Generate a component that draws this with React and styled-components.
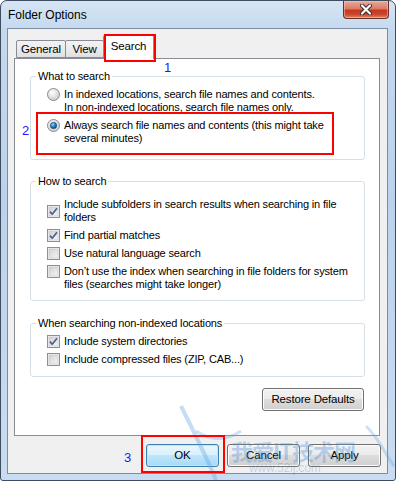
import React from 'react';
import styled, { createGlobalStyle } from 'styled-components';

const GlobalStyle = createGlobalStyle`
  html, body {
    margin: 0;
    padding: 0;
    background: #ffffff;
  }
  body {
    font-family: "Liberation Sans", Arial, sans-serif;
    font-size: 11px;
    letter-spacing: -0.15px;
    color: #000;
  }
`;

const Window = styled.div`
  position: relative;
  width: 396px;
  height: 481px;
  box-sizing: border-box;
  border: 1px solid #3d4d5f;
  border-radius: 7px 7px 3px 3px;
  background: linear-gradient(180deg, #d6e5f5 0px, #c4d8ee 30px, #bcd2ec 200px, #c9dcf1 481px);
  display: flex;
  flex-direction: column;
  overflow: hidden;
`;

const TitleBar = styled.div`
  height: 27px;
  flex: none;
  display: flex;
  justify-content: space-between;
  align-items: flex-start;
  padding-left: 7px;
`;

const Title = styled.div`
  line-height: 28px;
  font-size: 12px;
  letter-spacing: 0;
`;

const CloseButton = styled.div`
  width: 46px;
  height: 18px;
  box-sizing: border-box;
  margin-right: 6px;
  border: 1px solid #6b2f25;
  border-top: none;
  border-radius: 0 0 4px 4px;
  background: linear-gradient(180deg, #e9a99b 0%, #dc7b66 45%, #c7371f 55%, #c94a30 80%, #e08a6c 100%);
  box-shadow: inset 0 0 0 1px rgba(255, 200, 190, 0.5);
  display: flex;
  align-items: center;
  justify-content: center;
`;

const Client = styled.div`
  flex: 1;
  margin: 0 7px 6px 6px;
  border: 1px solid #7d8da0;
  background: #f0f0f0;
  display: flex;
  flex-direction: column;
  padding: 6px 7px 0 6px;
`;

const TabStrip = styled.div`
  height: 23px;
  display: flex;
  align-items: flex-end;
  padding-left: 2px;
  position: relative;
  z-index: 2;
`;

const Tab = styled.div`
  width: ${p => p.$w}px;
  height: ${p => (p.$active ? 24 : 18)}px;
  margin-bottom: ${p => (p.$active ? -1 : 0)}px;
  margin-left: ${p => (p.$first ? 0 : -1)}px;
  box-sizing: border-box;
  border: 1px solid #898c95;
  border-bottom: ${p => (p.$active ? 'none' : '1px solid #898c95')};
  border-radius: 2px 2px 0 0;
  background: ${p =>
    p.$active ? '#ffffff' : 'linear-gradient(180deg, #f3f3f3 0%, #ebebeb 50%, #e0e0e0 100%)'};
  display: flex;
  justify-content: center;
  align-items: ${p => (p.$active ? 'flex-start' : 'center')};
  padding-top: ${p => (p.$active ? 4 : 0)}px;
  font-size: 11.5px;
  line-height: 13px;
  white-space: nowrap;
`;

const Panel = styled.div`
  height: 378px;
  box-sizing: border-box;
  border: 1px solid #898c95;
  background: #ffffff;
  display: flex;
  flex-direction: column;
  padding: 0 14px 0 15px;
`;

const GroupBox = styled.div`
  margin-top: ${p => p.$mt}px;
  border: 1px solid #d5dfe5;
  border-radius: 3px;
  display: flex;
  flex-direction: column;
  padding: 0 10px ${p => p.$pb}px 16px;
`;

const GroupTitle = styled.div`
  align-self: flex-start;
  margin: -7px 0 0 -11px;
  padding: 0 2px;
  background: #ffffff;
  line-height: 13px;
  white-space: nowrap;
`;

const Rows = styled.div`
  margin-top: ${p => p.$mt}px;
  display: flex;
  flex-direction: column;
  gap: ${p => p.$gap || 5}px;
`;

const Option = styled.div`
  display: flex;
  align-items: ${p => (p.$center ? 'center' : 'flex-start')};
  gap: 4px;
`;

const OptionText = styled.div`
  line-height: 13px;
  white-space: nowrap;
`;

const Control = styled.svg`
  flex: none;
  width: 13px;
  height: 13px;
`;

const Button = styled.div`
  width: ${p => p.$w}px;
  height: 23px;
  box-sizing: border-box;
  border: 1px solid ${p => (p.$default ? '#3c7fb1' : '#707070')};
  border-radius: 3px;
  background: ${p =>
    p.$default
      ? 'linear-gradient(180deg, #eaf6fd 0%, #d9f0fc 49%, #bee6fd 50%, #a7d9f5 100%)'
      : 'linear-gradient(180deg, #f2f2f2 0%, #ebebeb 49%, #dddddd 50%, #cfcfcf 100%)'};
  box-shadow: inset 0 0 0 1px ${p => (p.$default ? '#c4e5f6' : '#fcfcfc')};
  display: flex;
  align-items: center;
  justify-content: center;
  font-size: 11.5px;
  line-height: 13px;
  white-space: nowrap;
`;

const RestoreRow = styled.div`
  margin-top: 11px;
  display: flex;
  justify-content: flex-end;
  padding-right: 1px;
`;

const ButtonRow = styled.div`
  margin-top: 8px;
  margin-right: -1px;
  display: flex;
  justify-content: flex-end;
  gap: 8px;
`;

const RedBox = styled.div`
  position: absolute;
  box-sizing: border-box;
  border: 2px solid #ff0000;
  z-index: 5;
`;

const Marker = styled.div`
  position: absolute;
  z-index: 5;
  font-size: 13px;
  line-height: 14px;
  letter-spacing: 0;
  color: #1a1aff;
`;

const Watermark = styled.div`
  position: absolute;
  left: 175px;
  top: 395px;
  width: 221px;
  height: 86px;
  z-index: 4;
  pointer-events: none;
`;

const MarkTitle = styled.div`
  position: absolute;
  left: 55px;
  top: 42px;
  font-family: "Noto Sans CJK SC", sans-serif;
  font-weight: 700;
  font-size: 22px;
  line-height: 24px;
  letter-spacing: -1px;
  color: rgba(70, 140, 215, 0.35);
`;

const MarkUrl = styled.div`
  position: absolute;
  left: 73px;
  top: 66px;
  font-size: 12px;
  line-height: 12px;
  color: rgba(70, 140, 215, 0.3);
`;

const Radio = ({ checked }) => (
  <Control viewBox="0 0 13 13">
    <defs>
      <radialGradient id="rbg" cx="0.4" cy="0.35" r="0.7">
        <stop offset="0" stopColor="#ffffff" />
        <stop offset="1" stopColor="#c9c9c9" />
      </radialGradient>
      <radialGradient id="rdot" cx="0.4" cy="0.35" r="0.7">
        <stop offset="0" stopColor="#8fdcff" />
        <stop offset="0.5" stopColor="#2a7fc0" />
        <stop offset="1" stopColor="#0c3d6d" />
      </radialGradient>
    </defs>
    <circle cx="6.5" cy="6.5" r="6" fill="url(#rbg)" stroke="#8b8b8b" strokeWidth="1" />
    {checked && <circle cx="6.5" cy="6.5" r="3.2" fill="url(#rdot)" stroke="#1b4e7b" strokeWidth="0.6" />}
  </Control>
);

const Check = ({ checked }) => (
  <Control viewBox="0 0 13 13">
    <defs>
      <linearGradient id="cbg" x1="0" y1="0" x2="1" y2="1">
        <stop offset="0" stopColor="#d0d0d0" />
        <stop offset="1" stopColor="#f6f6f6" />
      </linearGradient>
    </defs>
    <rect x="0.5" y="0.5" width="12" height="12" fill="#f4f4f4" stroke="#8e8f8f" />
    <rect x="2" y="2" width="9" height="9" fill="url(#cbg)" stroke="#c4c4c4" strokeWidth="0.6" />
    {checked && (
      <path d="M3 6.6 L5.2 9.2 L10 3.2" fill="none" stroke="#4a5f97" strokeWidth="1.7" strokeLinejoin="round" />
    )}
  </Control>
);

const CloseGlyph = () => (
  <svg width="12" height="11" viewBox="0 0 12 11">
    <path d="M2 1.5 L10 9.5 M10 1.5 L2 9.5" stroke="#3a2a28" strokeWidth="4" strokeLinecap="round" />
    <path d="M2 1.5 L10 9.5 M10 1.5 L2 9.5" stroke="#ffffff" strokeWidth="2.2" strokeLinecap="round" />
  </svg>
);

const Swoosh = () => (
  <svg width="221" height="86" viewBox="0 0 221 86">
    <path d="M5 10 C 20 40, 30 60, 40 84" fill="none" stroke="rgba(90,160,225,0.35)" strokeWidth="4" />
    <path d="M20 35 C 35 45, 50 45, 65 35" fill="none" stroke="rgba(90,160,225,0.3)" strokeWidth="3" />
    <path d="M190 30 C 205 45, 210 60, 218 70" fill="none" stroke="rgba(90,160,225,0.3)" strokeWidth="3" />
  </svg>
);

const App = () => {
  return (
    <Window>
      <GlobalStyle />
      <TitleBar>
        <Title>Folder Options</Title>
        <CloseButton>
          <CloseGlyph />
        </CloseButton>
      </TitleBar>
      <Client>
        <TabStrip>
          <Tab $w={50} $first>General</Tab>
          <Tab $w={39}>View</Tab>
          <Tab $w={51} $active>Search</Tab>
        </TabStrip>
        <Panel>
          <GroupBox $mt={17} $pb={14}>
            <GroupTitle>What to search</GroupTitle>
            <Rows $mt={5}>
              <Option>
                <Radio />
                <OptionText>
                  In indexed locations, search file names and contents.
                  <br />
                  In non-indexed locations, search file names only.
                </OptionText>
              </Option>
              <Option>
                <Radio checked />
                <OptionText>
                  Always search file names and contents (this might take
                  <br />
                  several minutes)
                </OptionText>
              </Option>
            </Rows>
          </GroupBox>

          <GroupBox $mt={21} $pb={9}>
            <GroupTitle>How to search</GroupTitle>
            <Rows $mt={10}>
              <Option $center>
                <Check checked />
                <OptionText>
                  Include subfolders in search results when searching in file
                  <br />
                  folders
                </OptionText>
              </Option>
              <Option>
                <Check checked />
                <OptionText>Find partial matches</OptionText>
              </Option>
              <Option>
                <Check />
                <OptionText>Use natural language search</OptionText>
              </Option>
              <Option>
                <Check />
                <OptionText>
                  Don’t use the index when searching in file folders for system
                  <br />
                  files (searches might take longer)
                </OptionText>
              </Option>
            </Rows>
          </GroupBox>

          <GroupBox $mt={22} $pb={10}>
            <GroupTitle>When searching non-indexed locations</GroupTitle>
            <Rows $mt={5}>
              <Option>
                <Check checked />
                <OptionText>Include system directories</OptionText>
              </Option>
              <Option>
                <Check />
                <OptionText>Include compressed files (ZIP, CAB...)</OptionText>
              </Option>
            </Rows>
          </GroupBox>

          <RestoreRow>
            <Button $w={102}>Restore Defaults</Button>
          </RestoreRow>
        </Panel>
        <ButtonRow>
          <Button $w={73} $default>OK</Button>
          <Button $w={73}>Cancel</Button>
          <Button $w={73}>Apply</Button>
        </ButtonRow>
      </Client>

      <RedBox style={{ left: 103, top: 33, width: 52, height: 28 }} />
      <RedBox style={{ left: 35, top: 111, width: 298, height: 43 }} />
      <RedBox style={{ left: 140, top: 434, width: 84, height: 38 }} />
      <Marker style={{ left: 163, top: 60 }}>1</Marker>
      <Marker style={{ left: 21, top: 123 }}>2</Marker>
      <Marker style={{ left: 123, top: 450 }}>3</Marker>

      <Watermark>
        <Swoosh />
        <MarkTitle>我爱IT技术网</MarkTitle>
        <MarkUrl>www.52ij.com</MarkUrl>
      </Watermark>
    </Window>
  );
};

export default App;
